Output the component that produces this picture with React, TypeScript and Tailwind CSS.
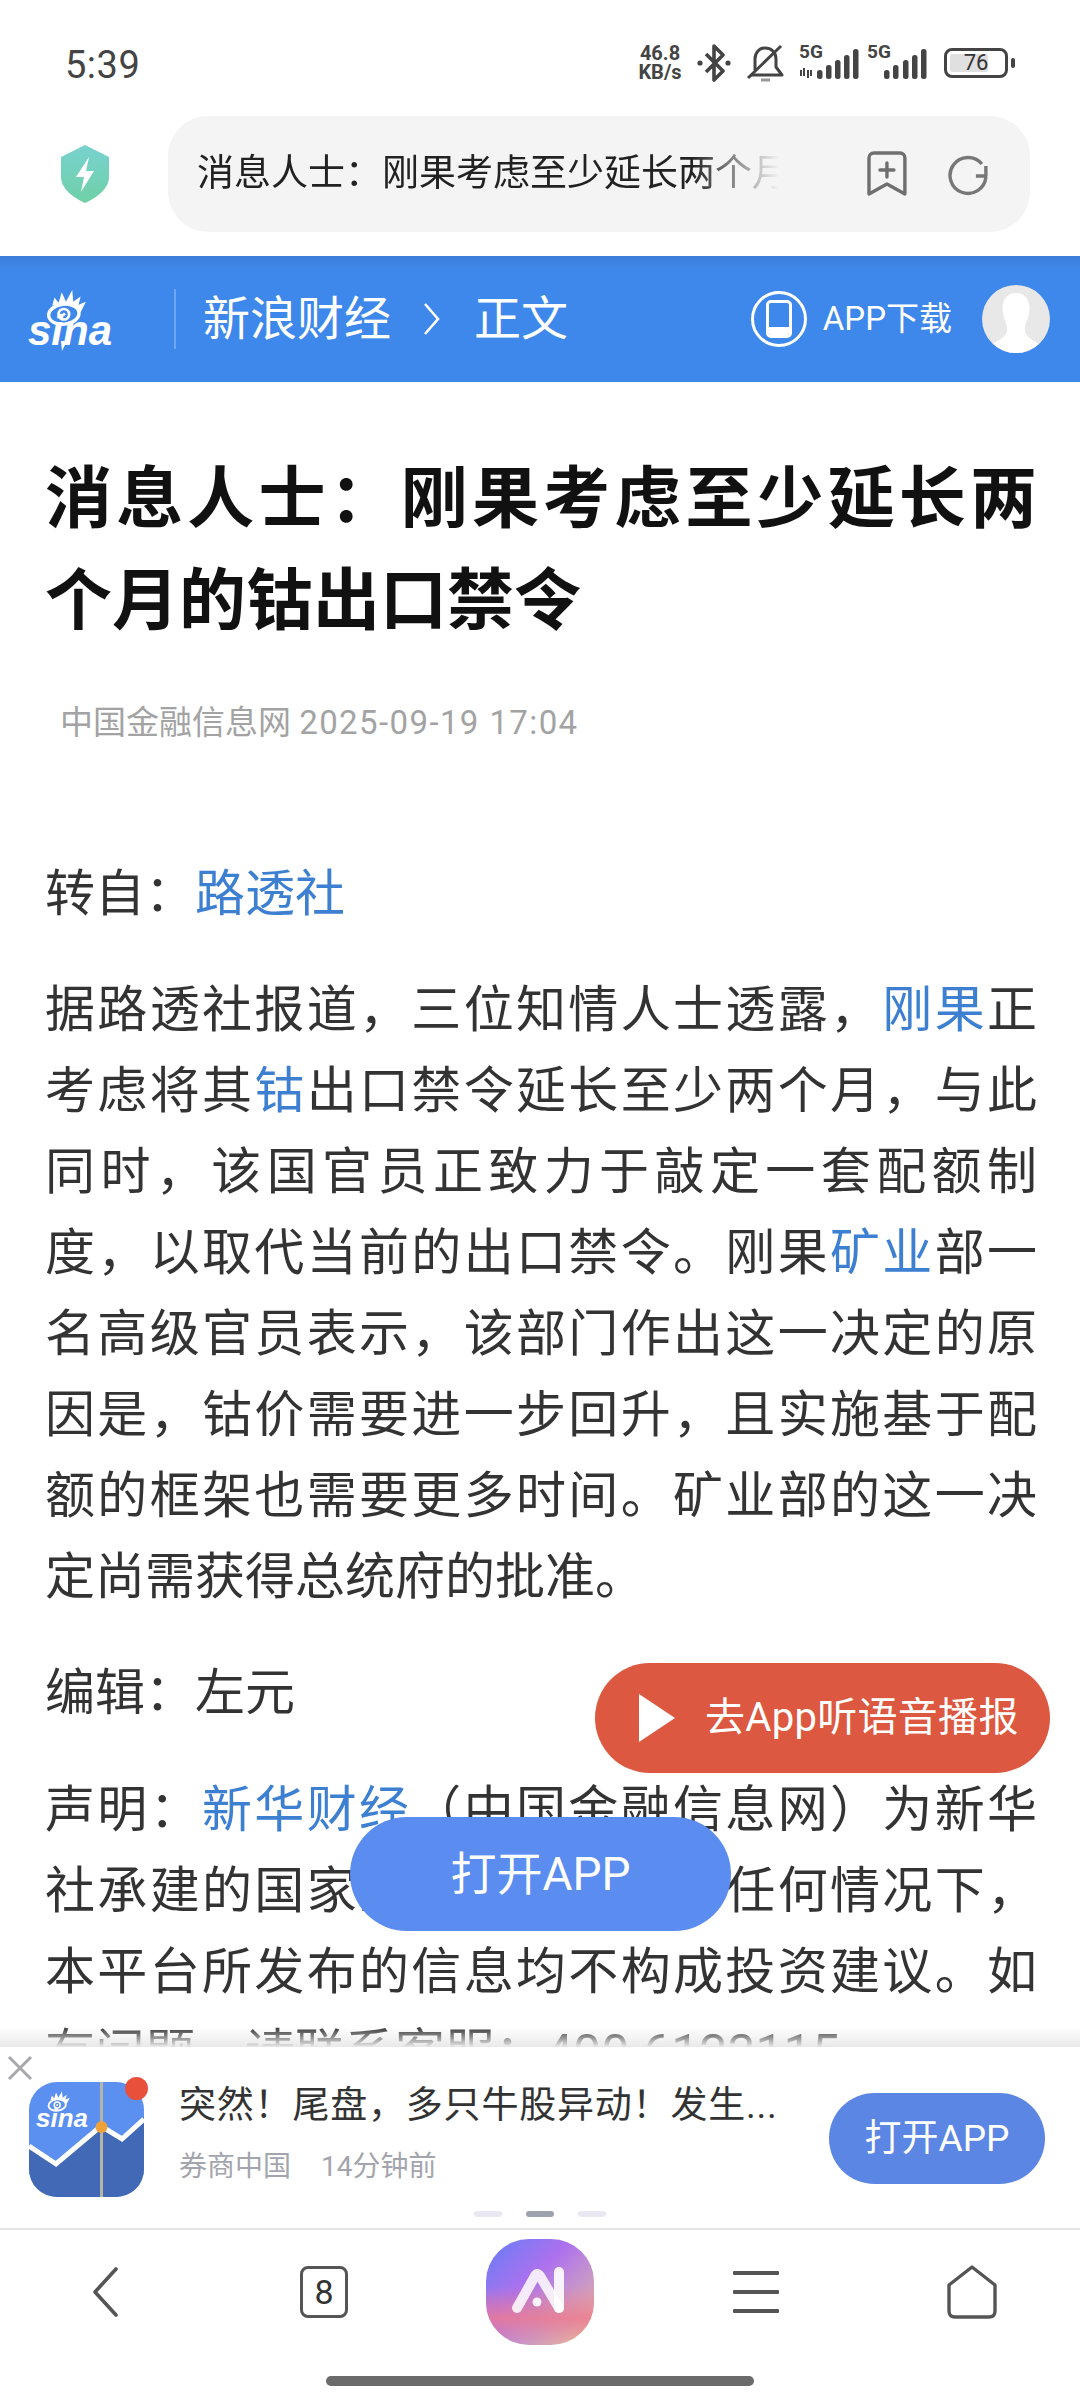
import React from "react";

const Signal = ({ arrows }: { arrows?: boolean }) => (
  <div className="relative w-[62px] h-[34px]">
    <span className="absolute left-0 top-[-4px] text-[19px] leading-[20px] font-bold text-[#444]">5G</span>
    <svg width="62" height="34" viewBox="0 0 62 34" className="absolute left-0 top-0">
      {arrows && (
        <path d="M2 24v6M5 22v8M9 24v8M12 24v6" stroke="#444" strokeWidth="2" fill="none" />
      )}
      {[[arrows ? 18 : 17, 24], [arrows ? 27 : 26, 19], [36, 14], [45, 9], [54, 3]].map(([x, y], i) => (
        <rect key={i} x={x} y={y} width="5.5" height={33 - y} rx="2.5" fill="#444" />
      ))}
    </svg>
  </div>
);

const SinaEye = ({ size, color = "white" }: { size: number; color?: string }) => (
  <svg width={size} height={size * 0.95} viewBox="0 0 40 38" fill="none">
    <ellipse cx="17" cy="25" rx="14.5" ry="9.5" stroke={color} strokeWidth="3.2" transform="rotate(-6 17 25)" />
    <circle cx="17" cy="25" r="5" stroke={color} strokeWidth="2.6" />
    <circle cx="17" cy="25" r="1.5" fill={color} />
    <path d="M6 17 L8 9 L12 14 L15 4 L19 13 L25 2 L26 13 L33 8 L31 16 L38 13 L33 23 Q22 13 6 17 Z" fill={color} />
  </svg>
);

const ShieldIcon = () => (
  <svg width="50" height="58" viewBox="0 0 50 58">
    <defs>
      <linearGradient id="sh" x1="0" y1="0" x2="0" y2="1">
        <stop offset="0" stopColor="#78d2d0" />
        <stop offset="1" stopColor="#6fd0a6" />
      </linearGradient>
    </defs>
    <path d="M25 0 L49 12 V32 C49 44 36 53 25 58 C14 53 1 44 1 32 V12 Z" fill="url(#sh)" />
    <path d="M29 12 L16 32 H24 L21 47 L34 26 H26 Z" fill="white" />
  </svg>
);

const NAV_STROKE = "#555";

export default function App() {
  return (
    <div className="w-[1080px] h-[2400px] overflow-hidden bg-white flex flex-col relative [font-family:Roboto,'Noto_Sans_CJK_SC',sans-serif]">
      {/* Status bar */}
      <div className="h-[116px] shrink-0 flex items-start justify-between pl-[65px] pr-[65px] pt-[43px]">
        <span className="text-[38px] leading-[44px] text-[#444] tracking-[0.5px]">5:39</span>
        <div className="flex items-center gap-[10px] mt-[1px]">
          <div className="flex flex-col items-center text-[20px] leading-[19px] font-bold text-[#444] w-[52px]">
            <span>46.8</span>
            <span>KB/s</span>
          </div>
          <svg width="36" height="38" viewBox="0 0 36 38" fill="none" stroke="#444" strokeWidth="3.6">
            <path d="M10 10 L27 27 L18 36 V2 L27 11 L10 28" strokeLinejoin="round" />
            <circle cx="4" cy="19" r="2.6" fill="#444" stroke="none" />
            <circle cx="32" cy="19" r="2.6" fill="#444" stroke="none" />
          </svg>
          <svg width="38" height="38" viewBox="0 0 38 38" fill="none" stroke="#444" strokeWidth="3" className="ml-[5px]">
            <path d="M4 31 H35 L29 23 V15 C29 8 24 4 18 4 C12 4 8 9 8 15 V26" strokeLinejoin="round" />
            <path d="M1 34 L34 2" />
            <path d="M14 36 H23" stroke="#999" />
          </svg>
          <div className="ml-[4px]"><Signal arrows /></div>
          <div className="-ml-[4px]"><Signal /></div>
          <div className="flex items-center gap-[3px] ml-[5px]">
            <div className="w-[64px] h-[30px] rounded-[8px] border-[3px] border-[#444] p-[3px] relative">
              <div className="h-full w-[74%] bg-[#e0e0e0] rounded-[2px]" />
              <span className="absolute inset-0 flex items-center justify-center text-[22px] leading-none text-[#333]">76</span>
            </div>
            <div className="w-[4px] h-[10px] rounded-[2px] bg-[#444]" />
          </div>
        </div>
      </div>

      {/* URL row */}
      <div className="h-[140px] shrink-0 flex items-start pl-[60px] pr-[50px]">
        <div className="w-[50px] h-[116px] flex items-center"><ShieldIcon /></div>
        <div className="ml-[58px] w-[862px] h-[116px] rounded-[40px] bg-[#f4f4f4] flex items-center pl-[29px] pr-[40px]">
          <div className="w-[584px] overflow-hidden whitespace-nowrap text-[37px] leading-[44px] text-[#222] [mask-image:linear-gradient(to_right,black_85%,transparent)]">
            消息人士：刚果考虑至少延长两个月的钴出口禁令
          </div>
          <svg width="42" height="46" viewBox="0 0 42 46" fill="none" stroke="#6f6f6f" strokeWidth="3.4" className="ml-[87px]" strokeLinejoin="round">
            <path d="M3 7 C3 4 5 2 8 2 H34 C37 2 39 4 39 7 V43 L21 33 L3 43 Z" />
            <path d="M21 12 V26 M14 19 H28" strokeLinecap="round" />
          </svg>
          <svg width="44" height="44" viewBox="0 0 44 44" fill="none" stroke="#777" strokeWidth="3.4" className="ml-[38px]">
            <path d="M36 12 A18 18 0 1 0 40 25" />
            <path d="M30 24 L40 24 L40 14" strokeLinejoin="round" />
          </svg>
        </div>
      </div>

      {/* Blue header */}
      <div className="h-[126px] shrink-0 bg-gradient-to-b from-[#3b7edb] from-0% to-[#3f88eb] to-[12%] flex items-center pl-[28px] pr-[30px] text-white">
        <div className="w-[88px] h-[62px] flex flex-col items-center relative">
          <div className="absolute left-[18px] top-0"><SinaEye size={42} /></div>
          <span className="absolute left-0 top-[26px] text-[42px] leading-[34px] font-bold italic [font-family:'Liberation_Sans',sans-serif]">sina</span>
          <svg width="8" height="10" viewBox="0 0 8 10" fill="white" className="absolute left-[33px] top-[53px]"><path d="M0 0 H6 L1 10 Z" /></svg>
        </div>
        <div className="ml-[58px] w-[2px] h-[60px] bg-[#6ea6f1]" />
        <span className="ml-[27px] text-[47px] leading-[56px]">新浪财经</span>
        <svg width="18" height="34" viewBox="0 0 18 34" fill="none" stroke="white" strokeWidth="2.6" className="ml-[32px]">
          <path d="M2 2 L15 17 L2 32" />
        </svg>
        <span className="ml-[33px] text-[47px] leading-[56px]">正文</span>
        <div className="ml-auto w-[56px] h-[56px] rounded-full border-[3px] border-white flex items-center justify-center">
          <div className="w-[26px] h-[38px] rounded-[5px] border-[3px] border-white relative overflow-hidden">
            <div className="absolute left-0 right-0 bottom-0 h-[8px] bg-white" />
          </div>
        </div>
        <span className="ml-[16px] text-[33px] leading-[40px]">APP下载</span>
        <div className="ml-[30px] w-[68px] h-[68px] rounded-full bg-[#e8e8e8] overflow-hidden flex justify-center items-end">
          <svg width="52" height="62" viewBox="0 0 52 62" fill="white">
            <path d="M26 2 C37 2 41 12 39 22 C38 29 34 34 35 40 C36 46 44 50 52 54 V62 H0 V54 C8 50 16 46 17 40 C18 34 14 29 13 22 C11 12 15 2 26 2 Z" />
          </svg>
        </div>
      </div>

      {/* Article */}
      <div className="flex-1 min-h-0 overflow-hidden relative pl-[45px] pr-[43px] pt-[66px]">
        <h1 className="text-[67px] leading-[102px] font-bold text-[#111] text-justify">
          消息人士：刚果考虑至少延长两个月的钴出口禁令
        </h1>
        <div className="mt-[51px] ml-[15px] text-[33px] leading-[40px] text-[#a3a3a3]">中国金融信息网 <span className="tracking-[1.4px]">2025-09-19 17:04</span></div>
        <div className="mt-[111px] flex flex-col gap-[35px] text-[50px] leading-[81px] text-[#333] text-justify">
          <p>转自：<span className="text-[#3d7fd0]">路透社</span></p>
          <p>
            据路透社报道，三位知情人士透露，<span className="text-[#3d7fd0]">刚果</span>正考虑将其<span className="text-[#3d7fd0]">钴</span>出口禁令延长至少两个月，与此同时，该国官员正致力于敲定一套配额制度，以取代当前的出口禁令。刚果<span className="text-[#3d7fd0]">矿业</span>部一名高级官员表示，该部门作出这一决定的原因是，钴价需要进一步回升，且实施基于配额的框架也需要更多时间。矿业部的这一决定尚需获得总统府的批准。
          </p>
          <p>编辑：左元</p>
          <p className="mt-[1px]">
            声明：<span className="text-[#3d7fd0]">新华财经</span>（中国金融信息网）为新华社承建的国家金融信息平台。任何情况下，本平台所发布的信息均不构成投资建议。如有问题，请联系客服：400-6123115。
          </p>
        </div>
        <div className="absolute left-0 right-0 bottom-0 h-[20px] bg-gradient-to-b from-transparent to-[#e9e9e9]" />
      </div>

      {/* Banner */}
      <div className="h-[181px] shrink-0 bg-white relative flex items-start pl-[29px] pr-[35px] pt-[35px]">
        <svg width="26" height="26" viewBox="0 0 26 26" stroke="#a8a8ae" strokeWidth="3" className="absolute left-[7px] top-[8px]">
          <path d="M2 2 L24 24 M24 2 L2 24" />
        </svg>
        <div className="w-[115px] h-[115px] rounded-[28px] overflow-hidden relative bg-[#5b8ff0] shrink-0">
          <svg width="115" height="115" viewBox="0 0 115 115" className="absolute inset-0">
            <path d="M0 64 L27 82 L72 44 L93 57 L115 35 V115 H0 Z" fill="#4269b5" />
            <path d="M0 64 L27 82 L72 44 L93 57 L115 37" fill="none" stroke="white" strokeWidth="5" />
            <rect x="71" y="0" width="3" height="115" fill="#b5b5a8" />
            <circle cx="72.5" cy="45" r="6" fill="#eda23a" />
          </svg>
          <div className="absolute left-[7px] top-[8px] w-[52px] h-[40px]">
            <div className="absolute left-[11px] top-0"><SinaEye size={24} /></div>
            <span className="absolute left-0 top-[17px] text-[26px] leading-[22px] font-bold italic text-white [font-family:'Liberation_Sans',sans-serif]">sina</span>
          </div>
        </div>
        <div className="absolute left-[125px] top-[30px] w-[23px] h-[23px] rounded-full bg-[#e8503c]" />
        <div className="ml-[35px] w-[620px]">
          <div className="text-[37px] leading-[44px] text-[#333] whitespace-nowrap mt-[2px] tracking-[0.8px]">突然！尾盘，多只牛股异动！发生...</div>
          <div className="mt-[21px] flex text-[28px] leading-[36px] text-[#a3a5ad]">
            <span>券商中国</span>
            <span className="ml-[30px]">14分钟前</span>
          </div>
        </div>
        <div className="ml-auto mt-[11px] w-[216px] h-[91px] rounded-full bg-[#5b86e3] text-white text-[37px] flex items-center justify-center">打开APP</div>
        <div className="absolute bottom-[11px] left-[474px] flex gap-[24px]">
          <div className="w-[28px] h-[6px] rounded-[3px] bg-[#e8e8f2]" />
          <div className="w-[28px] h-[6px] rounded-[3px] bg-[#9ca3af]" />
          <div className="w-[28px] h-[6px] rounded-[3px] bg-[#e8e8f2]" />
        </div>
      </div>

      {/* Bottom nav */}
      <div className="h-[172px] shrink-0 border-t-2 border-[#e6e6e6] flex flex-col">
        <div className="grid grid-cols-5 h-[118px] items-center pt-[6px]">
          <div className="flex justify-center">
            <svg width="28" height="50" viewBox="0 0 28 50" fill="none" stroke={NAV_STROKE} strokeWidth="3.6" strokeLinecap="round" strokeLinejoin="round" className="-ml-[6px]">
              <path d="M25 2 L4 25 L25 48" />
            </svg>
          </div>
          <div className="flex justify-center">
            <div className="w-[48px] h-[52px] rounded-[8px] border-[3px] border-[#555] flex items-center justify-center text-[34px] leading-none text-[#333]">8</div>
          </div>
          <div className="flex justify-center">
            <div className="w-[108px] h-[106px] rounded-[40%] bg-gradient-to-br from-[#5c7cf6] via-[#ad70ee] via-40% to-[#f3bd84] relative overflow-hidden">
              <div className="absolute inset-0 bg-gradient-to-b from-transparent from-45% via-[#ec7a90] via-75% to-transparent opacity-80" />
              <svg width="108" height="106" viewBox="0 0 108 106" fill="none" className="absolute inset-0">
                <path d="M31 69 L49 37 Q51 33 54 37 L73 69" stroke="white" strokeOpacity="0.85" strokeWidth="10" strokeLinecap="round" />
                <path d="M73 69 V33" stroke="white" strokeOpacity="0.9" strokeWidth="10" strokeLinecap="round" />
                <circle cx="51" cy="63" r="4.5" fill="white" fillOpacity="0.9" />
              </svg>
            </div>
          </div>
          <div className="flex flex-col items-center gap-[15px]">
            <div className="w-[46px] h-[4px] bg-[#555] rounded-[1px]" />
            <div className="w-[46px] h-[4px] bg-[#555] rounded-[1px]" />
            <div className="w-[46px] h-[4px] bg-[#555] rounded-[1px]" />
          </div>
          <div className="flex justify-center">
            <svg width="50" height="54" viewBox="0 0 50 54" fill="none" stroke={NAV_STROKE} strokeWidth="3.4" strokeLinejoin="round" className="-ml-[1px]">
              <path d="M25 2 L48 20 V46 C48 50 46 52 42 52 H8 C4 52 2 50 2 46 V20 Z" />
            </svg>
          </div>
        </div>
        <div className="flex justify-center mt-[28px]">
          <div className="w-[428px] h-[10px] rounded-full bg-[#6b6b6b]" />
        </div>
      </div>

      {/* Floating pills */}
      <div className="absolute left-[595px] top-[1663px] w-[455px] h-[110px] rounded-full bg-[#dd5840] flex items-center text-white pl-[44px]">
        <svg width="36" height="48" viewBox="0 0 36 48" fill="white"><path d="M0 0 L36 24 L0 48 Z" /></svg>
        <span className="ml-[30px] text-[40px] leading-[48px] tracking-[0.3px]">去App听语音播报</span>
      </div>
      <div className="absolute left-[350px] top-[1817px] w-[381px] h-[114px] rounded-full bg-[#5b8cf0] flex items-center justify-center text-white text-[46px]">打开APP</div>
    </div>
  );
}
